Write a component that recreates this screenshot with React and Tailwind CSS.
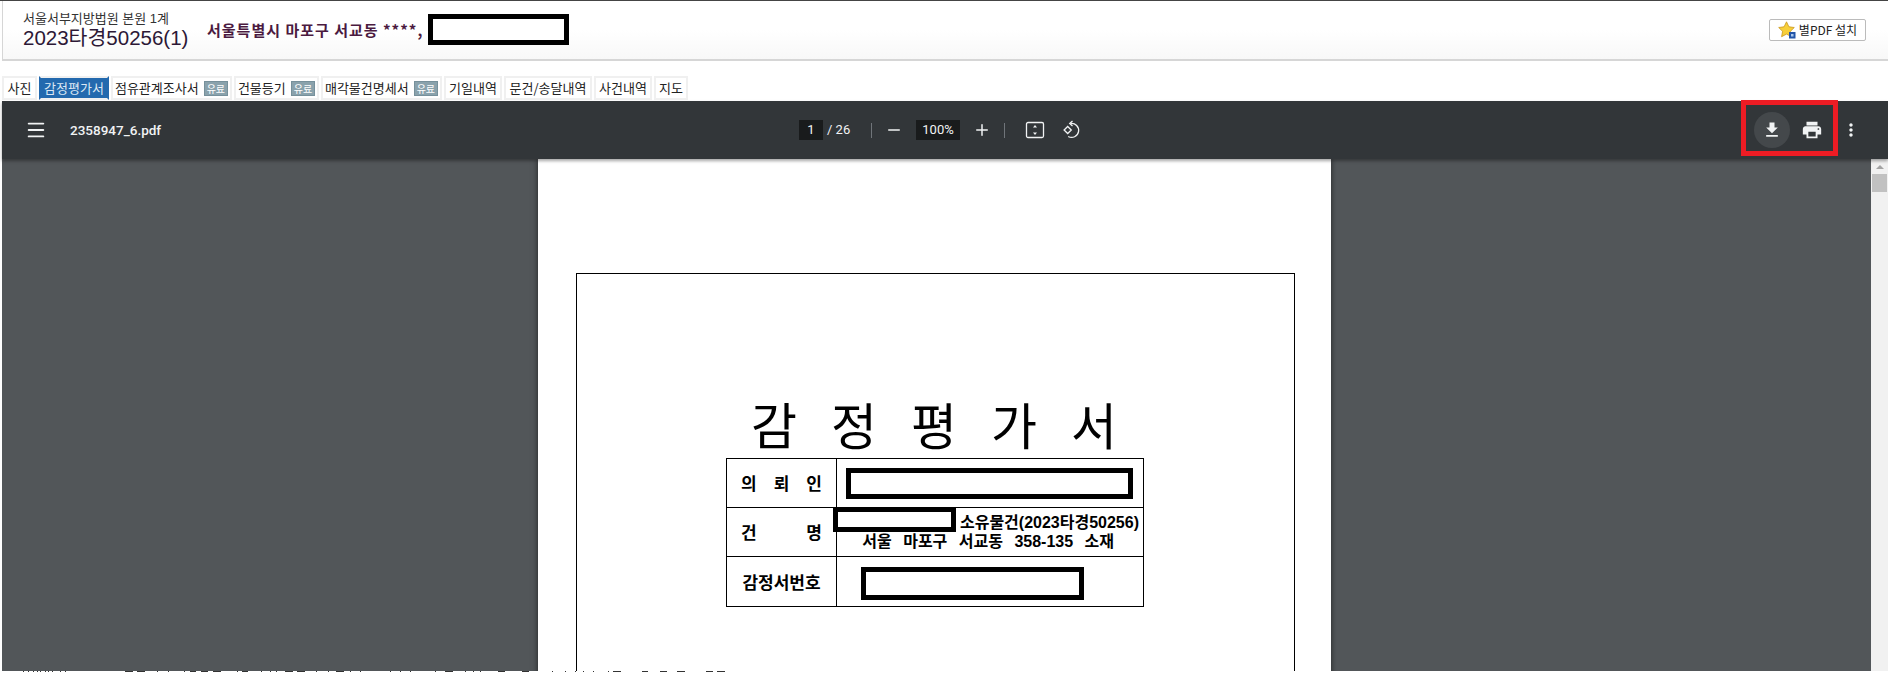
import { Menu, Minus, Plus } from "lucide-react";

const kr = "font-['Noto_Sans_CJK_KR','Noto_Sans',sans-serif]";
const mixed = "font-['Liberation_Sans','Noto_Sans_CJK_KR',sans-serif]";

const tabs = [
  { label: "사진", w: "w-[35px]" },
  { label: "감정평가서", w: "w-[70px]", active: true },
  { label: "점유관계조사서", w: "w-[121px]", paid: true },
  { label: "건물등기", w: "w-[85px]", paid: true },
  { label: "매각물건명세서", w: "w-[121px]", paid: true },
  { label: "기일내역", w: "w-[58px]" },
  { label: "문건/송달내역", w: "w-[88px]" },
  { label: "사건내역", w: "w-[58px]" },
  { label: "지도", w: "w-[34px]" },
];

// clipped tops of the next text line, showing in the last row of the window
const cutText = [
  [23, 1], [28, 1], [33, 1], [37, 1], [40, 1], [45, 1], [48, 1], [52, 1], [60, 1], [65, 1],
  [125, 8], [137, 8], [157, 1], [168, 1], [184, 1], [190, 6], [201, 7], [213, 8], [237, 1], [242, 6],
  [261, 1], [270, 1], [276, 1], [285, 8], [297, 8], [316, 1], [328, 1], [336, 8], [350, 1], [360, 1],
  [390, 1], [400, 1], [410, 1], [435, 1], [445, 8], [465, 1], [473, 1], [480, 1], [498, 7], [522, 7],
  [552, 1], [565, 1], [575, 1], [583, 1], [593, 1], [608, 1], [613, 8], [642, 6], [660, 7], [677, 8],
  [706, 7], [717, 8],
];

function Redact({ className }) {
  return <div className={"border-[5px] border-black bg-white " + className} />;
}

function Star() {
  return (
    <svg width="18" height="18" viewBox="0 0 18 18" className="shrink-0">
      <path d="M8.500 .8l2.400 5 5.400.7-3.900 3.800 1 5.400-4.900-2.600-4.900 2.600 1-5.400L.7 6.500l5.400-.7z" fill="#f7cf3a" stroke="#c9961a" strokeWidth="0.8" />
      <rect x="11" y="11" width="6.500" height="6.500" fill="#2456a8" />
      <rect x="13" y="13" width="2.500" height="2.500" fill="#a9c8ee" />
    </svg>
  );
}

function FitIcon() {
  return (
    <svg width="20" height="20" viewBox="0 0 20 20" fill="none" className="text-[#f1f3f4]">
      <rect x="1.500" y="2.500" width="17" height="15" rx="1.500" stroke="currentColor" strokeWidth="1.300" />
      <path d="M10 5l2 2.500H8zM10 15l-2-2.500h4z" fill="currentColor" />
    </svg>
  );
}

function RotateIcon() {
  return (
    <svg width="20" height="20" viewBox="0 0 20 20" fill="none" stroke="#f1f3f4" strokeWidth="1.300">
      <path d="M6.700 6.500 10.300 10 6.700 13.500 3.100 10z" />
      <path d="M9.500 3.500a7 7 0 1 1-2.300 13" />
      <path d="M11.500 1 8.700 3.500l2.800 2.500" />
    </svg>
  );
}

function Glyph({ d, className }) {
  return (
    <svg viewBox="0 0 24 24" fill="#f1f3f4" className={className}>
      <path d={d} />
    </svg>
  );
}

function Tab({ tab }) {
  return (
    <div
      className={
        "flex items-center justify-center gap-[5px] h-[24px] border-2 text-[13px] whitespace-nowrap " +
        tab.w +
        (tab.active
          ? " bg-[#2369ae] border-y-[#f0f0f0] border-x-[#2369ae] text-[#dce8f4]"
          : " bg-white border-[#f0f0f0] text-[#222222]")
      }
    >
      <span>{tab.label}</span>
      {tab.paid && (
        <span className="bg-[#8aa2ac] border border-[#76909b] text-white text-[10px] leading-[13px] px-[2px]">유료</span>
      )}
    </div>
  );
}

export default function App() {
  return (
    <div className={"relative h-[673px] w-[1888px] overflow-hidden bg-white flex flex-col " + kr}>
      {/* top header */}
      <div className="border-t border-[#444444]">
        <div className="ml-[2px] h-[60px] border-l border-b-2 border-[#d6d6d6] bg-gradient-to-b from-white from-50% to-[#f8f8f8] flex items-center pl-[20px] pr-[20px]">
          <div className={"w-[184px] mt-[1px] " + mixed}>
            <div className="text-[13px] leading-[15px] text-[#333333]">서울서부지방법원 본원 1계</div>
            <div className="text-[20.500px] leading-[24px] text-[#2d1836] whitespace-nowrap">2023타경50256(1)</div>
          </div>
          <div className="w-[221px] text-[15px] tracking-[1px] font-bold text-[#4b1a40] whitespace-nowrap">서울특별시 마포구 서교동 ****,</div>
          <Redact className="w-[141px] h-[31px] -mt-[2px]" />
          <div className="ml-auto mr-[2px] -mt-[1px] h-[22px] w-[97px] border border-[#bbbbbb] rounded-[2px] bg-white flex items-center justify-center gap-[3px] text-[12px] text-[#222222] whitespace-nowrap">
            <Star />
            <span>별PDF 설치</span>
          </div>
        </div>
      </div>

      {/* tabs */}
      <div className="ml-[2px] mt-[15px] mb-[1px] flex gap-[2px]">
        {tabs.map((t) => (
          <Tab key={t.label} tab={t} />
        ))}
      </div>

      {/* pdf viewer */}
      <div className="ml-[2px] h-[571px] flex flex-col">
        <div className="relative z-10 h-[58px] shrink-0 bg-[#323639] shadow-[0_2px_3px_rgba(0,0,0,0.35)] flex items-center font-['Roboto',sans-serif] text-[#f1f3f4]">
          <Menu className="ml-[23px] size-[22px]" strokeWidth={2} />
          <span className="ml-[23px] w-[100px] text-[13.500px] font-medium whitespace-nowrap">2358947_6.pdf</span>
          <div className="ml-[629px] w-[24px] h-[20px] bg-[#191b1c] flex items-center justify-center text-[13px]">1</div>
          <span className="ml-[4px] w-[24px] text-[13px] whitespace-nowrap">/ 26</span>
          <div className="ml-[20px] w-px h-[15px] bg-[#70757a]" />
          <Minus className="ml-[13px] size-[18px]" strokeWidth={2} />
          <div className="ml-[13px] w-[44px] h-[20px] bg-[#191b1c] flex items-center justify-center text-[13px]">100%</div>
          <Plus className="ml-[13px] size-[18px]" strokeWidth={2} />
          <div className="ml-[13px] w-px h-[15px] bg-[#70757a]" />
          <div className="ml-[20px]"><FitIcon /></div>
          <div className="ml-[16px]"><RotateIcon /></div>
          <div className="ml-[673px] size-[36px] rounded-full bg-[#44484b] flex items-center justify-center">
            <Glyph d="M19 9h-4V3H9v6H5l7 7 7-7zM5 18v2h14v-2H5z" className="size-[20px]" />
          </div>
          <Glyph
            d="M19 8H5c-1.660 0-3 1.340-3 3v6h4v4h12v-4h4v-6c0-1.660-1.340-3-3-3zm-3 11H8v-5h8v5zm3-7c-.55 0-1-.45-1-1s.45-1 1-1 1 .45 1 1-.45 1-1 1zm-1-9H6v4h12V3z"
            className="ml-[11px] size-[22px]"
          />
          <Glyph
            d="M12 8c1.100 0 2-.9 2-2s-.9-2-2-2-2 .9-2 2 .9 2 2 2zm0 2c-1.100 0-2 .9-2 2s.9 2 2 2 2-.9 2-2-.9-2-2-2zm0 6c-1.100 0-2 .9-2 2s.9 2 2 2 2-.9 2-2-.9-2-2-2z"
            className="ml-[18px] size-[20px]"
          />
        </div>

        <div className="flex h-[512px] shrink-0 overflow-hidden">
          <div className="w-[1869px] bg-[#525659] overflow-hidden">
            <div className="ml-[536px] w-[793px] h-[800px] bg-white shadow-[0_0_6px_rgba(0,0,0,0.6)] pl-[38px] pt-[114px]">
              <div className="w-[719px] h-[600px] border border-black">
                <div className="pt-[114px] pl-[174px] text-[50px] leading-[70px] tracking-[34px] text-black whitespace-nowrap">감정평가서</div>
                <div className="relative ml-[149px] w-[418px] border border-black text-[17px] font-bold text-black">
                  <div className="flex h-[49px] border-b border-black">
                    <div className="w-[110px] border-r border-black flex items-center justify-between px-[14px]">
                      <span>의</span><span>뢰</span><span>인</span>
                    </div>
                    <div className="flex-1 flex items-center pl-[9px]">
                      <Redact className="w-[287px] h-[31px]" />
                    </div>
                  </div>
                  <div className="flex h-[49px] border-b border-black">
                    <div className="w-[110px] border-r border-black flex items-center justify-between px-[14px]">
                      <span>건</span><span>명</span>
                    </div>
                    <div className={"flex-1 flex flex-col items-end justify-center pr-[4px] text-[16px] leading-[19px] whitespace-nowrap " + mixed}>
                      <span>소유물건(2023타경50256)</span>
                      <span className="mr-[25px] [word-spacing:7px]">서울 마포구 서교동 358-135 소재</span>
                    </div>
                  </div>
                  <div className="flex h-[49px]">
                    <div className="w-[110px] border-r border-black flex items-center justify-center">감정서번호</div>
                    <div className="flex-1 flex items-center pl-[24px]">
                      <Redact className="w-[223px] h-[33px] mt-[3px]" />
                    </div>
                  </div>
                  {/* this one spills over the column line */}
                  <Redact className="absolute left-[106px] top-[48px] w-[123px] h-[25px]" />
                </div>
              </div>
            </div>
          </div>

          {/* scrollbar */}
          <div className="w-[17px] bg-[#f1f1f1] flex flex-col items-center">
            <div className="h-[15px] flex items-center justify-center">
              <div className="border-x-[4px] border-x-transparent border-b-[4px] border-b-[#a3a3a3]" />
            </div>
            <div className="w-[15px] h-[18px] bg-[#c1c1c1]" />
          </div>
        </div>

        <svg width="760" height="1" className="block -ml-[2px] shrink-0">
          {cutText.map(([x, w]) => (
            <rect key={x} x={x} y="0" width={w} height="1" fill="#333333" />
          ))}
        </svg>
      </div>

      {/* red annotation round the download and print buttons */}
      <div className="absolute z-20 left-[1741px] top-[100px] w-[97px] h-[56px] border-[5px] border-[#ed1c24]" />
    </div>
  );
}
